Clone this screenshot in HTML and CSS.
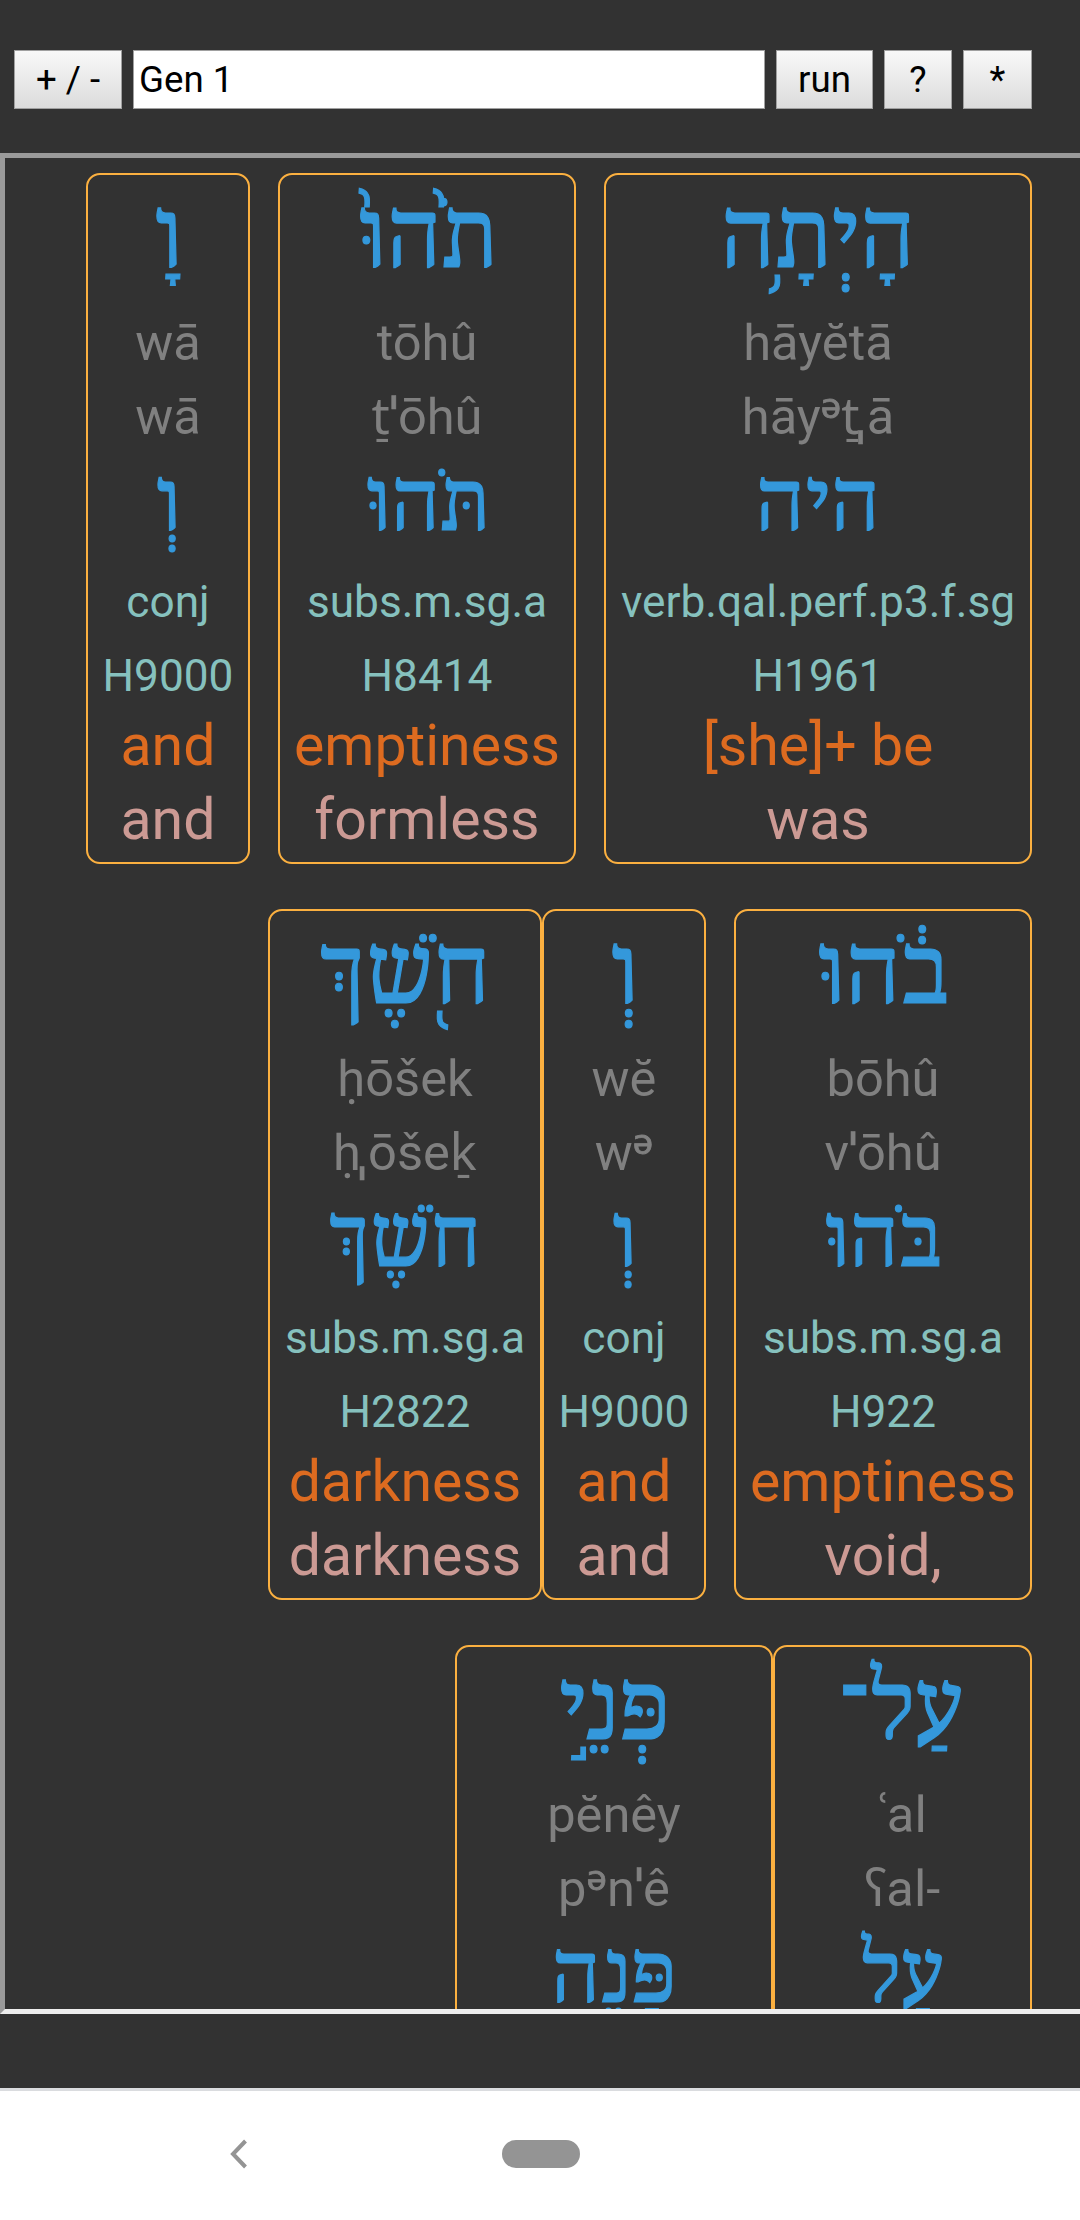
FILE: index.html
```html
<!DOCTYPE html>
<html lang="en">
<head>
<meta charset="utf-8">
<title>Gen 1</title>
<link rel="stylesheet" href="styles.css">
</head>
<body>
<div class="app">
  <form class="toolbar">
    <button type="button" class="btn btn-size">+ / -</button>
    <input class="query" type="text" value="Gen 1" aria-label="Passage">
    <button type="button" class="btn btn-run">run</button>
    <button type="button" class="btn btn-help">?</button>
    <button type="button" class="btn btn-more">*</button>
  </form>

  <main class="frame">
    <div class="row">
      <article class="card card-verb">
        <div class="word">הָיְתָ֥ה</div>
        <div class="line"><span class="tr">hāyĕtā</span></div>
        <div class="line"><span class="tr">hāy<span class="schwa">ᵊ</span>t̠<span class="stress low">ˌ</span>ā</span></div>
        <div class="lemma">היה</div>
        <div class="line"><span class="gram">verb.qal.perf.p3.f.sg</span></div>
        <div class="line"><span class="gram">H1961</span></div>
        <div class="line gloss">[she]+ be</div>
        <div class="line sense">was</div>
      </article>
      <article class="card card-noun gap">
        <div class="word">תֹ֙הוּ֙</div>
        <div class="line"><span class="tr">tōhû</span></div>
        <div class="line"><span class="tr">t̠<span class="stress">ˈ</span>ōhû</span></div>
        <div class="lemma">תֹּהוּ</div>
        <div class="line"><span class="gram">subs.m.sg.a</span></div>
        <div class="line"><span class="gram">H8414</span></div>
        <div class="line gloss">emptiness</div>
        <div class="line sense">formless</div>
      </article>
      <article class="card card-conj gap">
        <div class="word">וָ</div>
        <div class="line"><span class="tr">wā</span></div>
        <div class="line"><span class="tr">wā</span></div>
        <div class="lemma">וְ</div>
        <div class="line"><span class="gram">conj</span></div>
        <div class="line"><span class="gram">H9000</span></div>
        <div class="line gloss">and</div>
        <div class="line sense">and</div>
      </article>
    </div>

    <div class="row">
      <article class="card card-noun">
        <div class="word">בֹ֔הוּ</div>
        <div class="line"><span class="tr">bōhû</span></div>
        <div class="line"><span class="tr">v<span class="stress">ˈ</span>ōhû</span></div>
        <div class="lemma">בֹּהוּ</div>
        <div class="line"><span class="gram">subs.m.sg.a</span></div>
        <div class="line"><span class="gram">H922</span></div>
        <div class="line gloss">emptiness</div>
        <div class="line sense">void,</div>
      </article>
      <article class="card card-conj gap">
        <div class="word">וְ</div>
        <div class="line"><span class="tr">wĕ</span></div>
        <div class="line"><span class="tr">w<span class="schwa">ᵊ</span></span></div>
        <div class="lemma">וְ</div>
        <div class="line"><span class="gram">conj</span></div>
        <div class="line"><span class="gram">H9000</span></div>
        <div class="line gloss">and</div>
        <div class="line sense">and</div>
      </article>
      <article class="card card-dark">
        <div class="word">חֹ֖שֶׁךְ</div>
        <div class="line"><span class="tr">ḥōšek</span></div>
        <div class="line"><span class="tr">ḥ<span class="stress low">ˌ</span>ōšek̠</span></div>
        <div class="lemma">חֹשֶׁךְ</div>
        <div class="line"><span class="gram">subs.m.sg.a</span></div>
        <div class="line"><span class="gram">H2822</span></div>
        <div class="line gloss">darkness</div>
        <div class="line sense">darkness</div>
      </article>
    </div>

    <div class="row">
      <article class="card card-al">
        <div class="word">עַל־</div>
        <div class="line"><span class="tr">ʿal</span></div>
        <div class="line"><span class="tr">ʕal-</span></div>
        <div class="lemma">עַל</div>
      </article>
      <article class="card card-pene">
        <div class="word">פְּנֵ֣י</div>
        <div class="line"><span class="tr">pĕnêy</span></div>
        <div class="line"><span class="tr">p<span class="schwa">ᵊ</span>n<span class="stress">ˈ</span>ê</span></div>
        <div class="lemma">פַּנֵה</div>
      </article>
    </div>
  </main>

  <nav class="navbar">
    <svg class="back" width="18" height="30" viewBox="0 0 18 30"><path d="M15.5 2 3 15 15.5 28" fill="none" stroke="#949494" stroke-width="4"/></svg>
    <span class="home"></span>
  </nav>
</div>
</body>
</html>
```
FILE: styles.css
```css
* { box-sizing: border-box; }

body {
  margin: 0;
  background: #323232;
  font-family: Roboto, "Noto Sans", sans-serif;
}

.app {
  display: flex;
  flex-direction: column;
  width: 1080px;
  height: 2220px;
  overflow: hidden;
}

.toolbar {
  display: flex;
  flex: none;
  align-items: flex-start;
  height: 153px;
  margin: 0;
  padding: 50px 48px 0 14px;
  gap: 11px;
}

.btn,
.query {
  height: 59px;
  margin: 0;
  padding: 0;
  border: 1px solid #a0a0a0;
  border-radius: 0;
  color: #000;
  font: 36.67px Roboto, sans-serif;
}

.btn { background: linear-gradient(#f8f8f8, #dcdcdc); }
.btn-size { width: 108px; }
.btn-run { width: 97px; }
.btn-help { width: 68px; }
.btn-more { width: 69px; }

.query {
  flex: 1;
  min-width: 0;
  padding: 0 5px;
  background: #fff;
}

.frame {
  flex: none;
  height: 1861px;
  padding: 15px 48px 0 0;
  overflow: hidden;
  border: 5px solid #9a9a9a;
  border-bottom-color: #ededed;
  border-right: 0;
}

.row {
  display: flex;
  direction: rtl;
  height: 691px;
  margin-bottom: 45px;
}

.card {
  flex: none;
  padding: 6px 0 0;
  border: 2px solid #fbb040;
  border-radius: 14px;
  direction: ltr;
  text-align: center;
  white-space: nowrap;
}

.gap { margin-right: 28px; }
.card-verb { width: 428px; }
.card-noun { width: 298px; }
.card-conj { width: 164px; }
.card-dark { width: 274px; }
.card-al { width: 259px; }
.card-pene { width: 318px; }

.word,
.lemma {
  color: #3498db;
  font-family: "Noto Serif Hebrew", "Liberation Serif", serif;
  direction: rtl;
  -webkit-text-stroke: 1.2px #3498db;
}

.word {
  height: 123px;
  font-size: 91px;
  line-height: 116px;
}

.lemma {
  height: 109px;
  font-size: 81px;
  line-height: 106px;
}

.line {
  height: 74px;
  font-size: 57.2px;
  line-height: 74px;
}

.tr { color: #808080; font-size: 50.6px; }
.gram { color: #86c1be; font-size: 44.2px; }
.gloss { color: #dd6b20; }
.sense { color: #cc9a94; }

.schwa,
.stress {
  font-family: "Noto Sans", sans-serif;
  line-height: 1;
}

.schwa {
  font-size: 56px;
  -webkit-text-stroke: 0.8px #808080;
}

.stress { -webkit-text-stroke: 0.6px #808080; }
.low { margin: 0 2px 0 -3px; }

.navbar {
  display: flex;
  flex: none;
  align-items: center;
  height: 132px;
  margin-top: 74px;
  padding: 0 0 3px 230px;
  border-top: 3px solid #dadcdf;
  background: #fff;
}

.home {
  width: 78px;
  height: 28px;
  margin-left: 254px;
  border-radius: 14px;
  background: #949494;
}
```
